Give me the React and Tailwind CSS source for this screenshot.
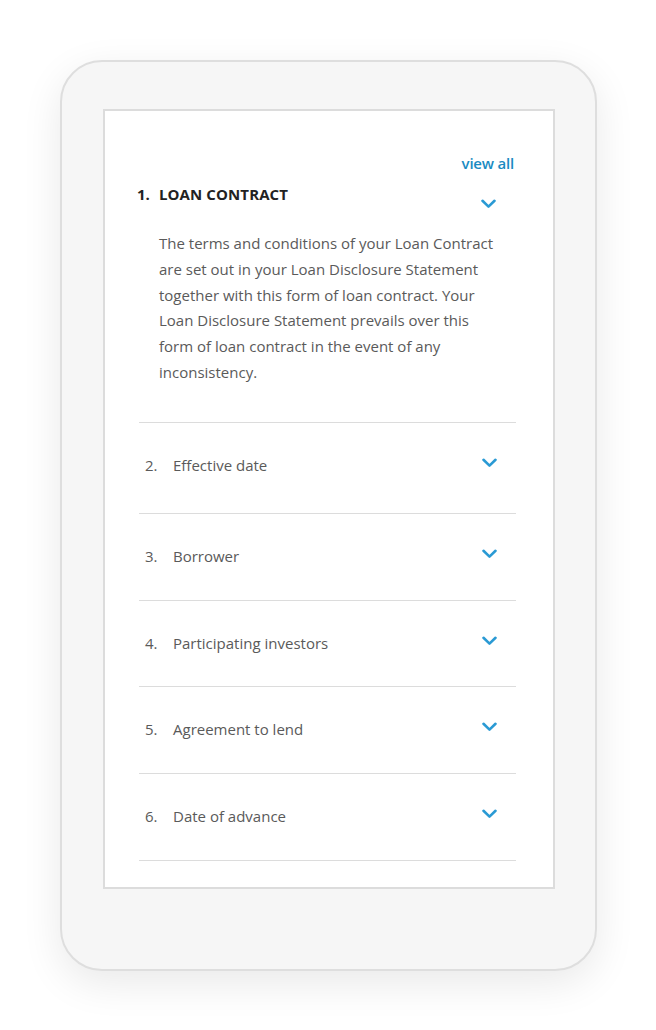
import React from 'react'

const rows = [
  { n: '2.', label: 'Effective date', h: 'h-[91px]' },
  { n: '3.', label: 'Borrower', h: 'h-[87px]' },
  { n: '4.', label: 'Participating investors', h: 'h-[86px]' },
  { n: '5.', label: 'Agreement to lend', h: 'h-[87px]' },
  { n: '6.', label: 'Date of advance', h: 'h-[87px]' },
]

function Chevron(){
  return (
    <svg width="15" height="10" viewBox="0 0 15 10" fill="none">
      <polyline points="1.5,1.8 7.5,7.6 13.5,1.8" stroke="#2a9ad4" strokeWidth="2.6" strokeLinecap="round" strokeLinejoin="round" />
    </svg>
  )
}

export default function App(){
  return (
    <div className="w-[656px] h-[1030px] bg-white pt-[60px] pl-[60px]" style={{ fontFamily: '"Open Sans", Lato, sans-serif' }}>
      <div className="w-[537px] h-[911px] rounded-[42px] border-2 border-[#dedede] bg-[#f6f6f6] pt-[47px] pl-[41px] shadow-[0_12px_40px_rgba(0,0,0,0.09)]">
        <div className="w-[452px] h-[780px] border-2 border-[#dcdcdc] bg-white pt-[42px] pl-[34px] pr-[37px]">
          <div className="flex justify-end h-[20px] items-center">
            <span className="text-[15px] font-semibold text-[#1a8bc2] mr-[2px] tracking-[-0.2px]">view all</span>
          </div>
          <div className="flex items-start mt-[11px]">
            <span className="w-[22px] -ml-[2px] text-[15px] leading-[20px] font-bold text-[#222]">1.</span>
            <span className="flex-1 text-[15px] leading-[20px] font-bold text-[#222] tracking-[0.1px]">LOAN CONTRACT</span>
            <span className="mt-[15px] mr-[20px]"><Chevron /></span>
          </div>
          <p className="mt-[22px] pl-[20px] pr-[16px] text-[15px] leading-[25.8px] text-[#5a5a5a]">
            The terms and conditions of your Loan Contract are set out in your Loan Disclosure Statement together with this form of loan contract. Your Loan Disclosure Statement prevails over this form of loan contract in the event of any inconsistency.
          </p>
          <div className="mt-[36px] border-b border-[#dcdcdc]">
            {rows.map(r => (
              <div key={r.n} className={`${r.h} border-t border-[#dcdcdc] flex items-start pt-[32px]`}>
                <span className="w-[34px] pl-[6px] text-[15px] leading-[20px] text-[#5a5a5a]">{r.n}</span>
                <span className="flex-1 text-[15px] leading-[20px] text-[#5a5a5a]">{r.label}</span>
                <span className="mt-[3px] mr-[19px]"><Chevron /></span>
              </div>
            ))}
          </div>
        </div>
      </div>
    </div>
  )
}
